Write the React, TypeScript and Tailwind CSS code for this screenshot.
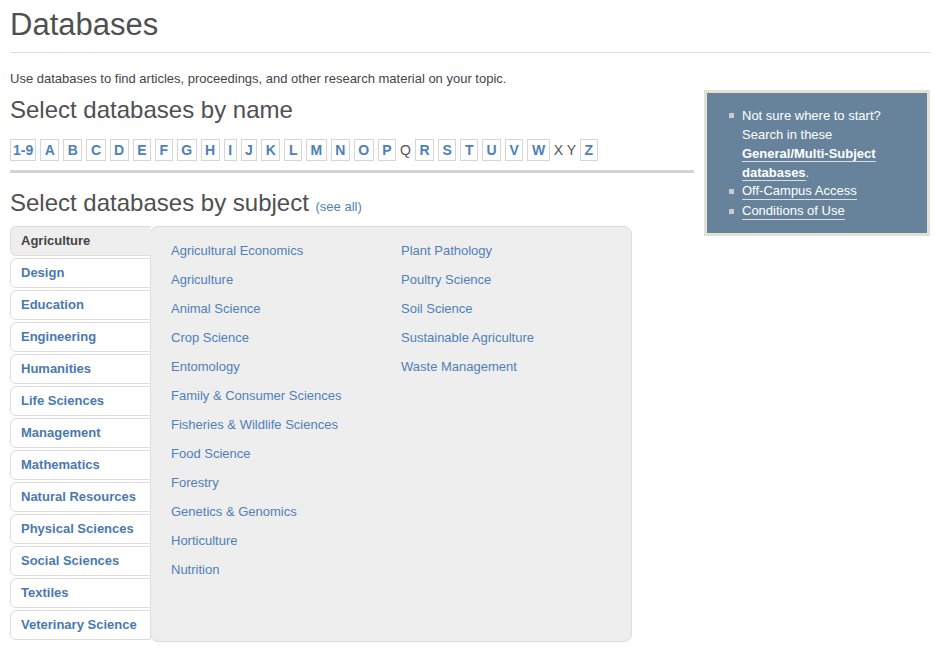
const letters: [string, boolean][] = [
  ["1-9", true], ["A", true], ["B", true], ["C", true], ["D", true], ["E", true],
  ["F", true], ["G", true], ["H", true], ["I", true], ["J", true], ["K", true],
  ["L", true], ["M", true], ["N", true], ["O", true], ["P", true], ["Q", false],
  ["R", true], ["S", true], ["T", true], ["U", true], ["V", true], ["W", true],
  ["X Y", false], ["Z", true],
];

const subjects = [
  "Agriculture", "Design", "Education", "Engineering", "Humanities", "Life Sciences",
  "Management", "Mathematics", "Natural Resources", "Physical Sciences",
  "Social Sciences", "Textiles", "Veterinary Science",
];

const colOne = [
  "Agricultural Economics", "Agriculture", "Animal Science", "Crop Science", "Entomology",
  "Family & Consumer Sciences", "Fisheries & Wildlife Sciences", "Food Science", "Forestry",
  "Genetics & Genomics", "Horticulture", "Nutrition",
];

const colTwo = [
  "Plant Pathology", "Poultry Science", "Soil Science", "Sustainable Agriculture",
  "Waste Management",
];

function Bullet() {
  return <span className="mt-[7px] mr-[8px] h-[5px] w-[5px] shrink-0 bg-[#c9ccce]" />;
}

export default function App() {
  return (
    <div className="min-h-[653px] bg-white pl-[10px] pr-[6px] font-['Liberation_Sans',Arial,sans-serif] text-[#4d4d4d]">
      <h1 className="pt-[7px] text-[31px] leading-[36px] text-[#505050]">Databases</h1>
      <div className="mt-[9px] h-px bg-[#dedede]" />
      <p className="mt-[18px] text-[13px] leading-[16px] text-[#454545]">
        Use databases to find articles, proceedings, and other research material on your topic.
      </p>

      <div className="mt-[3px] flex gap-[10px]">
        <div className="w-[684px]">
          <h2 className="pt-[6px] text-[24px] leading-[28px] text-[#505050]">Select databases by name</h2>
          <div className="mt-[15px] flex items-center gap-[4px]">
            {letters.map(([t, link]) =>
              link ? (
                <span
                  key={t}
                  className={
                    "border border-[#d6d6d6] text-[14px] font-bold leading-[20px] text-[#4f7fb8] " +
                    (t === "1-9" ? "px-[2px]" : "px-[3.5px]")
                  }
                >
                  {t}
                </span>
              ) : (
                <span key={t} className="text-[14px] leading-[20px] text-[#555]">
                  {t}
                </span>
              )
            )}
          </div>
          <div className="mt-[9px] h-[3px] bg-[#d4d4d4]" />

          <h2 className="mt-[16px] text-[24px] leading-[28px] text-[#505050]">
            Select databases by subject{" "}
            <span className="text-[13px] text-[#4f7fb8]">(see all)</span>
          </h2>

          <div className="mt-[5px] flex w-[622px]">
            <div className="relative z-10 -mr-px flex w-[141px] shrink-0 flex-col gap-[2px]">
              {subjects.map((s, i) =>
                i === 0 ? (
                  <div
                    key={s}
                    className="rounded-l-[6px] border border-r-0 border-[#dcdcdc] bg-[#eeeeee] pl-[10px] text-[13px] font-bold leading-[28px] text-[#444]"
                  >
                    {s}
                  </div>
                ) : (
                  <div
                    key={s}
                    className="rounded-l-[6px] border border-[#dcdcdc] bg-white pl-[10px] text-[13px] font-bold leading-[28px] text-[#4a79b0]"
                  >
                    {s}
                  </div>
                )
              )}
            </div>
            <div className="flex h-[416px] flex-1 rounded-[8px] border border-[#dcdcdc] bg-[#eeeeee] pt-[9px] pl-[20px] text-[13px] leading-[29px] text-[#5080b8]">
              <div className="w-[230px]">
                {colOne.map((c) => (
                  <div key={c}>{c}</div>
                ))}
              </div>
              <div>
                {colTwo.map((c) => (
                  <div key={c}>{c}</div>
                ))}
              </div>
            </div>
          </div>
        </div>

        <div className="h-[146px] w-[226px] border-[3px] border-[#e3e0d4] bg-[#67839c] pt-[13px] pl-[22px] text-[13px] leading-[19px] text-white">
          <div className="flex">
            <Bullet />
            <div>
              Not sure where to start?
              <br />
              Search in these
              <br />
              <span className="border-b border-[#d8dde2] font-bold">General/Multi-Subject</span>
              <br />
              <span className="border-b border-[#d8dde2] font-bold">databases</span>.
            </div>
          </div>
          <div className="flex">
            <Bullet />
            <span className="border-b border-[#d8dde2] leading-[17px] mb-[2px]">Off-Campus Access</span>
          </div>
          <div className="flex">
            <Bullet />
            <span className="border-b border-[#d8dde2] leading-[17px] mb-[2px]">Conditions of Use</span>
          </div>
        </div>
      </div>
    </div>
  );
}
